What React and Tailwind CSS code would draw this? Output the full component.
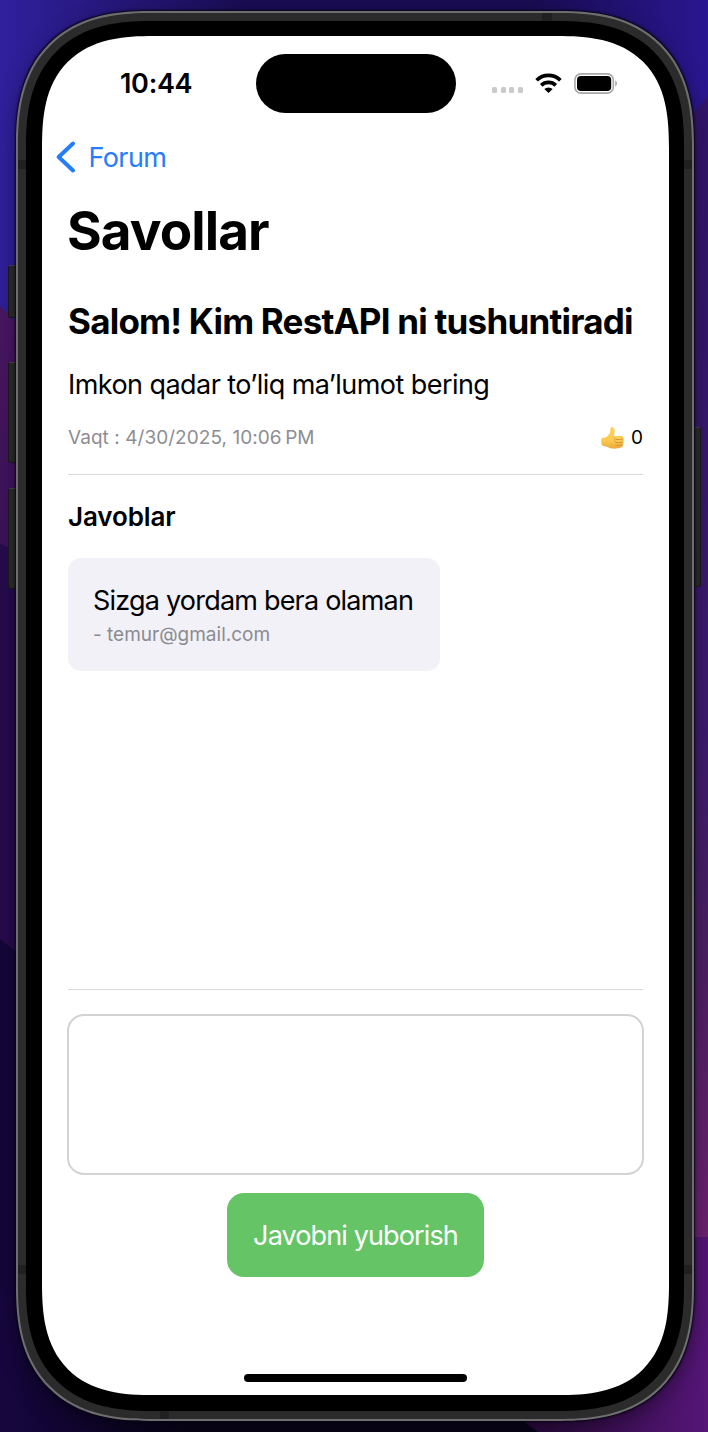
const Thumb = () => (
  <svg viewBox="0 0 24 24" className="h-[24px] w-[23px]" aria-hidden="true">
    <defs>
      <linearGradient id="skin" x1="0" y1="0" x2="0" y2="1">
        <stop offset="0" stopColor="#fbd264" />
        <stop offset="0.6" stopColor="#fbcb50" />
        <stop offset="1" stopColor="#eda93c" />
      </linearGradient>
    </defs>
    <path d="M1.500 11.800C3.500 11.600 5.200 11.400 7 9.800 8.800 8.200 9.700 6.100 9.700 3.500 9.700 1.300 10.300.4 11.500.5c2.400.3 3.200 2.800 2.700 5.500-.2 1.500-.5 2.700-.6 3.900h7.700c1.900 0 2.500 1.300 2 2.600.9 1 .8 2.500 0 3.300.6 1.100.4 2.400-.5 3.100.4 1.400-.4 2.600-1.900 3.100-2.500.9-6.300 1.400-9.600 1-3.200-.4-4-1.900-6.400-2.100-2-.2-3.300-.6-4-1.600C-.1 17.200-.1 12.500 1.500 11.800Z" fill="url(#skin)" />
    <path d="M15.500 13.500c2.500.3 5 .1 7.200-.4M15.500 16.700c2.500.3 5 .1 7-.5M15.500 19.700c2.500.2 4.500 0 6.500-.6" fill="none" stroke="#c5852f" strokeWidth="0.8" strokeLinecap="round" />
    <path d="M14.500 11c-.8 2-.6 4 .2 5.200" fill="none" stroke="#e0a03a" strokeWidth="0.8" />
  </svg>
);

const Wifi = () => (
  <svg viewBox="0 0 27 20" className="h-[20px] w-[27px]" aria-hidden="true">
    <g fill="none" stroke="#000" strokeWidth="3.700">
      <path d="M1.600 7.300a17 17 0 0 1 23.800 0" />
      <path d="M6.200 12.300a10.600 10.600 0 0 1 14.600 0" />
    </g>
    <path d="M13.500 20 9.300 16.100a6 6 0 0 1 8.400 0Z" />
  </svg>
);

const StatusBar = () => (
  <header className="flex h-[92px] shrink-0 pt-[18px]">
    <div className="w-[213.500px] shrink-0 pt-[11px] pl-[78px] text-[27px] leading-[37px] font-semibold tracking-[-0.300px]">10:44</div>
    <div className="h-[59px] w-[200px] shrink-0 rounded-full bg-black" />
    <div className="flex h-[58px] items-center pl-[36.500px]">
      <div className="flex gap-[3.400px] pt-[14px]">
        <i className="size-[5.200px] rounded-[1.500px] bg-[#cacaca]" />
        <i className="size-[5.200px] rounded-[1.500px] bg-[#cacaca]" />
        <i className="size-[5.200px] rounded-[1.500px] bg-[#cacaca]" />
        <i className="size-[5.200px] rounded-[1.500px] bg-[#cacaca]" />
      </div>
      <div className="ml-[12px] pb-[1px]"><Wifi /></div>
      <svg viewBox="0 0 44 21" className="ml-[12px] h-[21px] w-[44px]" aria-hidden="true">
        <rect x="0.900" y="0.900" width="38.400" height="19.200" rx="6" fill="none" stroke="#a8a8a8" strokeWidth="1.600" />
        <rect x="3" y="3" width="34.200" height="15" rx="4" />
        <path d="M41.300 7.300q3.200 3.200 0 6.400Z" fill="#999" />
      </svg>
    </div>
  </header>
);

const Seams = () => (
  <>
    <i className="absolute top-[147px] left-0 h-[9px] w-[8px] bg-[#202020]" />
    <i className="absolute top-[147px] right-0 h-[9px] w-[8px] bg-[#202020]" />
    <i className="absolute bottom-[145px] left-0 h-[9px] w-[8px] bg-[#202020]" />
    <i className="absolute right-0 bottom-[145px] h-[9px] w-[8px] bg-[#202020]" />
    <i className="absolute top-0 left-[524px] h-[8px] w-[10px] bg-[#202020]" />
    <i className="absolute bottom-0 left-[142px] h-[8px] w-[9px] bg-[#202020]" />
  </>
);

const sideButton = "absolute border border-t-[#484848] border-[#1b1b1b] bg-[#2c2c2c]";

export default function App() {
  return (
    <div className="relative h-[1432px] w-[708px] overflow-hidden bg-[#180747] pt-[11px] pl-[16px] font-['Inter',sans-serif] text-black">
      <svg className="absolute inset-0 h-full w-full" viewBox="0 0 708 1432" aria-hidden="true">
        <defs>
          <linearGradient id="top"><stop offset="0" stopColor="#30209c" /><stop offset="0.350" stopColor="#190c52" /><stop offset="0.750" stopColor="#190c52" /><stop offset="1" stopColor="#2a1791" /></linearGradient>
          <linearGradient id="left" x1="0" y1="0" x2="0" y2="1"><stop offset="0" stopColor="#4a1763" /><stop offset="1" stopColor="#240a4c" /></linearGradient>
          <linearGradient id="right" x1="0" y1="0" x2="0" y2="1"><stop offset="0" stopColor="#31156a" /><stop offset="0.550" stopColor="#3d1b70" /><stop offset="0.720" stopColor="#482063" /><stop offset="1" stopColor="#6d2270" /></linearGradient>
          <linearGradient id="base"><stop offset="0" stopColor="#16063f" /><stop offset="0.300" stopColor="#080318" /><stop offset="1" stopColor="#080318" /></linearGradient>
          <linearGradient id="corner"><stop offset="0" stopColor="#2a093c" /><stop offset="0.400" stopColor="#3a0e52" /><stop offset="1" stopColor="#551677" /></linearGradient>
        </defs>
        <rect width="708" height="320" fill="url(#top)" />
        <path d="M0 306 40 345V975L0 939Z" fill="url(#left)" />
        <path d="M0 544 40 560V975L0 939Z" fill="#270b4e" />
        <path d="M0 939 100 1020V1432H0Z" fill="#15063b" />
        <rect y="1290" width="620" height="142" fill="url(#base)" />
        <path d="M660 150 708 96V1240H660Z" fill="url(#right)" />
        <path d="M526 1423V1237H708V1432H538Z" fill="url(#corner)" />
      </svg>
      <div className={`${sideButton} top-[265px] left-[8px] h-[53px] w-[10px] rounded-l-[3px]`} />
      <div className={`${sideButton} top-[362px] left-[8px] h-[101px] w-[10px] rounded-l-[3px]`} />
      <div className={`${sideButton} top-[488px] left-[8px] h-[101px] w-[10px] rounded-l-[3px]`} />
      <div className={`${sideButton} top-[427px] left-[691px] h-[160px] w-[10px] rounded-r-[3px]`} />

      <div className="relative h-[1410px] w-[678px] rounded-[115px] border-2 border-[#6e6e70] bg-[#2b2b2b] p-[8px] shadow-[0_0_2px_1px_#090515,0_8px_22px_#00000066] supports-[corner-shape:squircle]:rounded-[134px] supports-[corner-shape:squircle]:[corner-shape:superellipse(1.3)]">
        <Seams />
        <div className="relative h-[1390px] w-[658px] rounded-[105px] bg-black pt-[15px] pl-[16px] supports-[corner-shape:squircle]:rounded-[124px] supports-[corner-shape:squircle]:[corner-shape:superellipse(1.3)]">
          <main className="flex h-[1359px] w-[627px] flex-col overflow-hidden rounded-[91px] bg-white supports-[corner-shape:squircle]:rounded-[112px] supports-[corner-shape:squircle]:[corner-shape:superellipse(1.4)]">
            <StatusBar />
            <nav className="flex h-[58px] shrink-0 items-center pl-[14px] text-[#267dfb]">
              <svg viewBox="0 0 20 32" className="h-[32px] w-[20px]" fill="none" stroke="currentColor" strokeWidth="4" strokeLinecap="round" strokeLinejoin="round" aria-hidden="true"><path d="M17 2.500 2.700 16 17 29.500" /></svg>
              <span className="ml-[12.500px] pt-[1px] text-[27px] leading-[36px] tracking-[-0.600px]">Forum</span>
            </nav>
            <h1 className="mt-[12px] ml-[25px] h-[64px] text-[53px] leading-[66px] font-bold tracking-[-0.900px]">Savollar</h1>
            <section className="mx-[26px] mt-[38px] h-[175px] shrink-0 border-b border-[#d9d9db]">
              <h2 className="-mt-px h-[44px] text-[35px] leading-[44px] font-bold tracking-[-0.780px] whitespace-nowrap">Salom! Kim RestAPI ni tushuntiradi</h2>
              <p className="mt-[24px] text-[27px] leading-[36px] tracking-[-0.560px] whitespace-nowrap">Imkon qadar to’liq ma’lumot bering</p>
              <div className="mt-[19px] flex h-[32px] items-center justify-between text-[19px]">
                <time className="tracking-[0.050px] text-[#8d8d91]">{"Vaqt : 4/30/2025, 10:06\u202fPM"}</time>
                <span className="flex items-center gap-[7px]"><Thumb />0</span>
              </div>
            </section>
            <section className="mx-[26px] h-[515px] shrink-0 border-b border-[#d9d9db] pt-[24px]">
              <h3 className="h-[36px] text-[26px] leading-[36px] font-semibold tracking-[-0.120px]">Javoblar</h3>
              <article className="mt-[23px] h-[113px] w-[372px] rounded-[13px] bg-[#f2f1f7] pt-[25px] pl-[25px]">
                <p className="text-[27px] leading-[36px] tracking-[-0.790px] whitespace-nowrap">Sizga yordam bera olaman</p>
                <p className="text-[19px] leading-[32px] text-[#8b8b90]">- temur@gmail.com</p>
              </article>
            </section>
            <textarea className="mx-[25px] mt-[24px] h-[161px] shrink-0 resize-none rounded-[17px] border-2 border-[#d3d3d5] bg-white outline-none" />
            <button className="mt-[18px] ml-[185px] h-[84px] w-[257px] shrink-0 rounded-[17px] bg-[#65c466] pt-[2px] text-[27px] tracking-[-0.880px] text-white">Javobni yuborish</button>
            <div className="mt-[97px] ml-[202px] h-[8px] w-[223px] shrink-0 rounded-full bg-black" />
          </main>
        </div>
      </div>
    </div>
  );
}
